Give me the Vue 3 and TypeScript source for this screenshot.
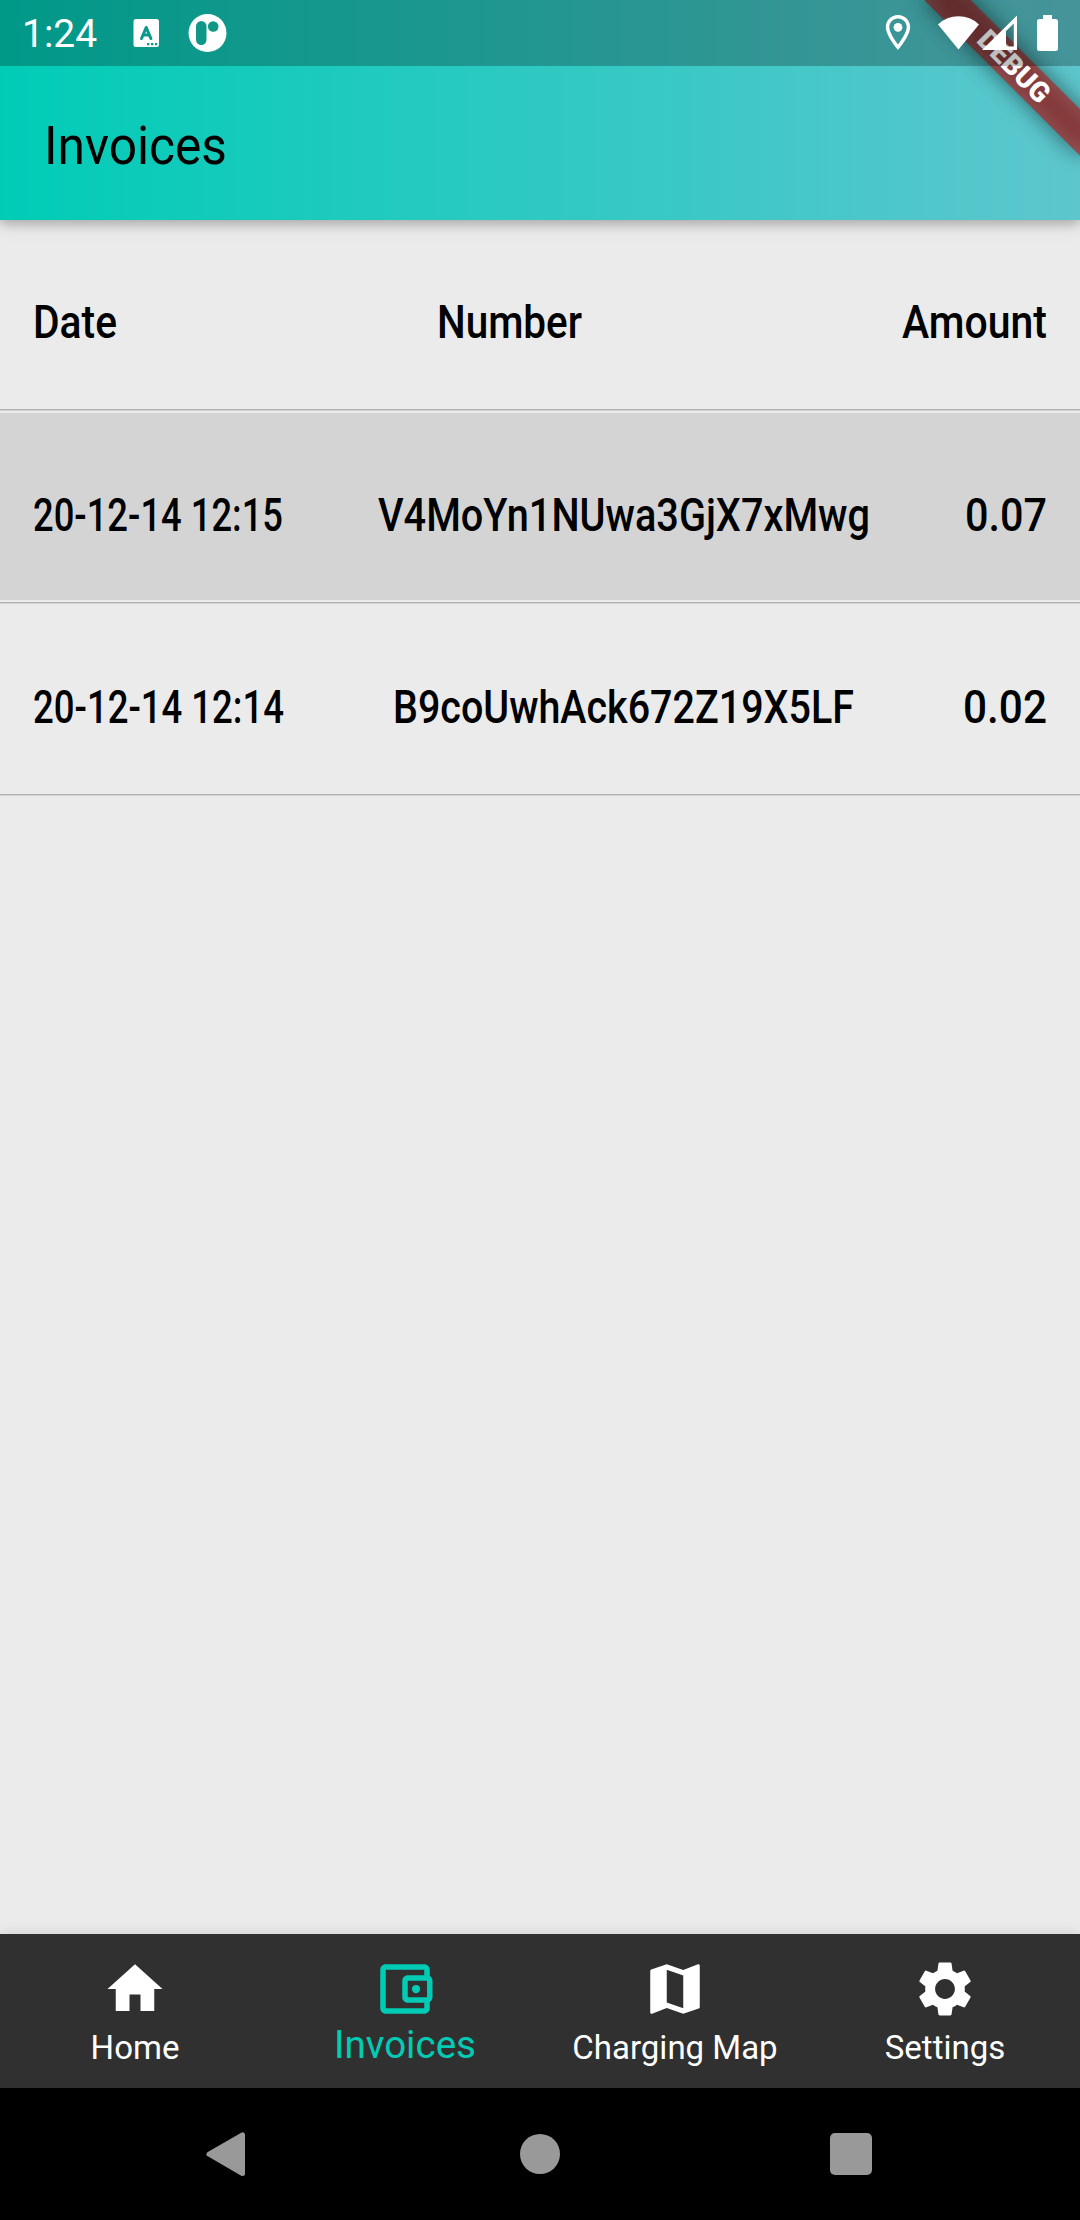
<script setup lang="ts">
interface Cell {
  text: string
  width: number
}

interface Row {
  id: string
  selected: boolean
  cells: Cell[]
}

interface Tab {
  label: string
  icon: string
  active: boolean
}

const rows: Row[] = [
  {
    id: 'head',
    selected: false,
    cells: [
      { text: 'Date', width: 84 },
      { text: 'Number', width: 145 },
      { text: 'Amount', width: 145 },
    ],
  },
  {
    id: 'first',
    selected: true,
    cells: [
      { text: '20-12-14 12:15', width: 250 },
      { text: 'V4MoYn1NUwa3GjX7xMwg', width: 492 },
      { text: '0.07', width: 82 },
    ],
  },
  {
    id: 'second',
    selected: false,
    cells: [
      { text: '20-12-14 12:14', width: 251 },
      { text: 'B9coUwhAck672Z19X5LF', width: 461 },
      { text: '0.02', width: 84 },
    ],
  },
]

const tabs: Tab[] = [
  { label: 'Home', active: false, icon: 'M10 20v-6h4v6h5v-8h3L12 3 2 12h3v8z' },
  {
    label: 'Invoices',
    active: true,
    icon: 'M21 7.28V5c0-1.1-.9-2-2-2H5c-1.11 0-2 .9-2 2v14c0 1.1.89 2 2 2h14c1.1 0 2-.9 2-2v-2.28c.59-.35 1-.98 1-1.72V9c0-.74-.41-1.38-1-1.72zM20 9v6h-7V9h7zM5 19V5h14v2h-6c-1.1 0-2 .9-2 2v6c0 1.1.9 2 2 2h6v2H5z M16 10.500a1.500 1.500 0 1 0 0 3a1.500 1.500 0 1 0 0-3z',
  },
  {
    label: 'Charging Map',
    active: false,
    icon: 'M20.5 3l-.16.03L15 5.100 9 3 3.360 4.900c-.21.07-.36.25-.36.48V20.500c0 .28.22.5.5.5l.16-.03L9 18.900l6 2.100 5.640-1.900c.21-.07.36-.25.36-.48V3.500c0-.28-.22-.5-.5-.5zM15 19l-6-2.110V5l6 2.110V19z',
  },
  {
    label: 'Settings',
    active: false,
    icon: 'M19.140 12.940c.04-.3.06-.61.06-.94 0-.32-.02-.64-.07-.94l2.030-1.580c.18-.14.23-.41.12-.61l-1.920-3.320c-.12-.22-.37-.29-.59-.22l-2.390.96c-.5-.38-1.030-.7-1.620-.94l-.36-2.540c-.04-.24-.24-.41-.48-.41h-3.840c-.24 0-.43.17-.47.41l-.36 2.540c-.59.24-1.130.57-1.620.94l-2.390-.96c-.22-.08-.47 0-.59.22L2.740 8.870c-.12.21-.08.47.12.61l2.030 1.580c-.05.3-.09.63-.09.94s.02.64.07.94l-2.030 1.580c-.18.14-.23.41-.12.61l1.920 3.320c.12.22.37.29.59.22l2.390-.96c.5.38 1.030.7 1.620.94l.36 2.540c.05.24.24.41.48.41h3.840c.24 0 .44-.17.47-.41l.36-2.540c.59-.24 1.130-.56 1.620-.94l2.390.96c.22.08.47 0 .59-.22l1.920-3.320c.12-.22.07-.47-.12-.61l-2.010-1.580zM12 15.600c-1.980 0-3.600-1.620-3.600-3.600s1.620-3.600 3.600-3.600 3.600 1.620 3.600 3.600-1.620 3.600-3.600 3.600z',
  },
]
</script>

<template>
  <div class="screen">
    <header class="app-bar">
      <div class="status">
        <span class="clock">1:24</span>
        <svg class="notes" width="96" height="40" viewBox="132 13 96 40">
          <path
            fill="#fff"
            d="M136 19h20.500a2.500 2.500 0 0 1 2.500 2.500v23a2.500 2.500 0 0 1-2.500 2.500H136a2.500 2.500 0 0 1-2.500-2.500v-23A2.500 2.500 0 0 1 136 19z"
          />
          <path class="cut" fill="none" stroke-width="3" stroke-linecap="round" stroke-linejoin="round" d="M141.500 38.500l4.700-11 4.700 11M143.500 35h5.500" />
          <path class="cut-fill" d="M147 43h2.400v2.200H147zM151 43h2.400v2.200H151zM155 43h2.200v2.200H155z" />
          <circle cx="207.500" cy="33" r="19" fill="#fff" />
          <rect class="cut-fill" x="196" y="21" width="10.500" height="24" rx="5.250" />
          <circle class="cut-fill" cx="213.200" cy="26.500" r="5.300" />
        </svg>
        <svg class="signals" width="180" height="40" viewBox="882 13 180 40">
          <path
            fill="#fff"
            fill-rule="evenodd"
            d="M898 15c-6.700 0-12.200 5.400-12.200 12.100C885.800 36 898 50 898 50s12.200-14 12.200-22.900C910.200 20.400 904.700 15 898 15zM898 18.600c4.800 0 8.700 3.800 8.700 8.500 0 4.900-4.900 12.500-8.700 17.300-3.800-4.800-8.700-12.400-8.700-17.300 0-4.700 3.900-8.500 8.700-8.500z"
          />
          <circle cx="898" cy="27.300" r="4.400" fill="#fff" />
          <path fill="#fff" d="M938 24.500a29.500 29.500 0 0 1 41 0L958.500 49.500z" />
          <path fill="#fff" fill-rule="evenodd" d="M982 50L1017 15.500V50zM1006 31V46.500h7.800V23.500z" />
          <path fill="#fff" d="M1043 15h9v4h3.500a2.500 2.500 0 0 1 2.500 2.500v27a2.500 2.500 0 0 1-2.500 2.500h-16a2.500 2.500 0 0 1-2.500-2.500v-27a2.500 2.500 0 0 1 2.500-2.500h3.500z" />
        </svg>
      </div>
      <h1 class="title">
        <svg width="183" height="64">
          <text x="0" y="51.500" textLength="183" lengthAdjust="spacingAndGlyphs">Invoices</text>
        </svg>
      </h1>
      <div class="corner">
        <div class="banner"><span>DEBUG</span></div>
      </div>
    </header>

    <main class="list">
      <div v-for="row in rows" :key="row.id" class="row" :class="{ selected: row.selected }">
        <svg v-for="cell in row.cells" :key="cell.text" class="cell" :width="cell.width" height="54">
          <text x="0" y="42.700" :textLength="cell.width" lengthAdjust="spacingAndGlyphs">{{ cell.text }}</text>
        </svg>
      </div>
    </main>

    <nav class="tabs">
      <div v-for="tab in tabs" :key="tab.label" class="tab" :class="{ active: tab.active }">
        <svg width="66" height="66" viewBox="0 0 24 24"><path fill="currentColor" :d="tab.icon" /></svg>
        <span class="tab-label">{{ tab.label }}</span>
      </div>
    </nav>

    <footer class="system">
      <svg width="42" height="48" viewBox="0 0 42 48"><path d="M38.500 4.800v38.800L5 24.200z" fill="#999" stroke="#999" stroke-width="5" stroke-linejoin="round" /></svg>
      <span class="dot"></span>
      <span class="square"></span>
    </footer>
  </div>
</template>

<style>
body {
  margin: 0;
}
</style>

<style scoped>
.screen {
  width: 1080px;
  height: 2220px;
  display: flex;
  flex-direction: column;
  overflow: hidden;
  background: #ebebeb;
  font-family: Roboto, "Liberation Sans", sans-serif;
}

.app-bar {
  position: relative;
  flex: none;
  height: 220px;
  background: linear-gradient(90deg, #00ccb6, #5dc6cd);
  box-shadow: 0 4px 10px rgba(0, 0, 0, 0.22), 0 3px 22px rgba(0, 0, 0, 0.1);
}

.status {
  position: relative;
  z-index: 2;
  height: 66px;
  display: flex;
  align-items: flex-start;
  background: rgba(0, 0, 0, 0.25);
}

.clock {
  width: 110px;
  padding-left: 22px;
  font-size: 39px;
  line-height: 46px;
  margin-top: 11px;
  color: #fff;
}

.notes {
  margin-top: 13px;
}

.cut {
  stroke: #0c9888;
}

.cut-fill {
  fill: #0f9788;
}

.signals {
  margin: 13px 18px 0 auto;
}

.title {
  margin: 0;
  padding: 46px 0 0 44px;
  font-size: 54.500px;
  font-weight: 400;
  line-height: 64px;
}

.title svg {
  display: block;
  overflow: visible;
}

.corner {
  position: absolute;
  z-index: 1;
  top: 0;
  right: 0;
  width: 220px;
  height: 220px;
  overflow: hidden;
}

.banner {
  position: absolute;
  left: 44px;
  top: 49.500px;
  width: 220px;
  height: 33px;
  transform: rotate(45deg);
  text-align: center;
  color: #fff;
  font-size: 28px;
  font-weight: 900;
  line-height: 33px;
}

.banner::before,
.banner::after {
  content: "";
  position: absolute;
  inset: 0;
  z-index: -1;
}

.banner::before {
  background: rgba(0, 0, 0, 0.5);
  filter: blur(11px);
}

.banner::after {
  background: rgba(183, 28, 28, 0.627);
}

.list {
  flex: 1;
}

.row {
  box-sizing: border-box;
  height: 192px;
  display: flex;
  justify-content: space-between;
  padding: 77px 33px 0;
  border-bottom: 1px solid #b0b0b0;
  box-shadow: 0 1px 0 #d2d2d2;
}

.row:first-child {
  height: 190px;
  padding-top: 75px;
}

.row.selected {
  height: 193px;
  padding-top: 78px;
  background: linear-gradient(#d4d4d4, #d4d4d4) 0 3px / 100% 187px no-repeat;
}

.cell {
  flex: none;
  overflow: visible;
  font-size: 46px;
  font-weight: 500;
  fill: #000;
}

.tabs {
  flex: none;
  height: 154px;
  display: flex;
  background: #303030;
  box-shadow: 0 0 14px rgba(0, 0, 0, 0.12);
}

.tab {
  flex: 1;
  display: flex;
  flex-direction: column;
  align-items: center;
  padding-top: 22px;
  color: #fff;
}

.tab svg {
  flex: none;
}

.tab-label {
  font-size: 33px;
  line-height: 39px;
  margin-top: 6px;
  white-space: nowrap;
}

.tab.active {
  color: #00ccb6;
}

.tab.active .tab-label {
  font-size: 38.500px;
  line-height: 45px;
  margin-top: 0;
}

.system {
  flex: none;
  height: 132px;
  display: flex;
  align-items: center;
  justify-content: space-between;
  padding: 0 208px 0 204px;
  background: #000;
}

.dot {
  width: 40px;
  height: 40px;
  margin-left: 4px;
  border-radius: 50%;
  background: #999;
}

.square {
  width: 42px;
  height: 42px;
  border-radius: 5px;
  background: #999;
}
</style>
